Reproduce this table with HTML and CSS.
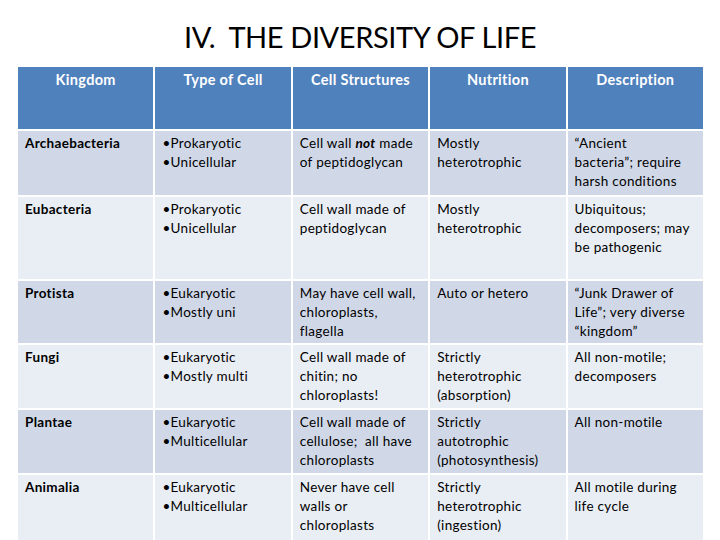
FILE: index.html
```html
<!DOCTYPE html>
<html>
<head>
<meta charset="utf-8">
<link rel="stylesheet" href="styles.css">
</head>
<body>
<h1 class="title">IV.&nbsp; THE DIVERSITY OF LIFE</h1>
<div class="table">
  <div class="cell head">Kingdom</div>
  <div class="cell head">Type of Cell</div>
  <div class="cell head">Cell Structures</div>
  <div class="cell head">Nutrition</div>
  <div class="cell head">Description</div>

  <div class="cell odd name">Archaebacteria</div>
  <div class="cell odd">•Prokaryotic<br>•Unicellular</div>
  <div class="cell odd">Cell wall <em class="strong">not</em> made<br>of peptidoglycan</div>
  <div class="cell odd">Mostly<br>heterotrophic</div>
  <div class="cell odd">“Ancient<br>bacteria”; require<br>harsh conditions</div>

  <div class="cell even name">Eubacteria</div>
  <div class="cell even">•Prokaryotic<br>•Unicellular</div>
  <div class="cell even">Cell wall made of<br>peptidoglycan</div>
  <div class="cell even">Mostly<br>heterotrophic</div>
  <div class="cell even">Ubiquitous;<br>decomposers; may<br>be pathogenic</div>

  <div class="cell odd name">Protista</div>
  <div class="cell odd">•Eukaryotic<br>•Mostly uni</div>
  <div class="cell odd">May have cell wall,<br>chloroplasts,<br>flagella</div>
  <div class="cell odd">Auto or hetero</div>
  <div class="cell odd">“Junk Drawer of<br>Life”; very diverse<br>“kingdom”</div>

  <div class="cell even name">Fungi</div>
  <div class="cell even">•Eukaryotic<br>•Mostly multi</div>
  <div class="cell even">Cell wall made of<br>chitin; no<br>chloroplasts!</div>
  <div class="cell even">Strictly<br>heterotrophic<br>(absorption)</div>
  <div class="cell even">All non-motile;<br>decomposers</div>

  <div class="cell odd name">Plantae</div>
  <div class="cell odd">•Eukaryotic<br>•Multicellular</div>
  <div class="cell odd">Cell wall made of<br>cellulose;&nbsp; all have<br>chloroplasts</div>
  <div class="cell odd">Strictly<br>autotrophic<br>(photosynthesis)</div>
  <div class="cell odd">All non-motile</div>

  <div class="cell even name">Animalia</div>
  <div class="cell even">•Eukaryotic<br>•Multicellular</div>
  <div class="cell even">Never have cell<br>walls or<br>chloroplasts</div>
  <div class="cell even">Strictly<br>heterotrophic<br>(ingestion)</div>
  <div class="cell even">All motile during<br>life cycle</div>
</div>
</body>
</html>
```
FILE: styles.css
```css
html, body {
  margin: 0;
  padding: 0;
  background: #ffffff;
  overflow: hidden;
}
body {
  width: 720px;
  height: 540px;
  font-family: Lato, "Open Sans", sans-serif;
  color: #000;
}
.title {
  margin: 0;
  height: 67px;
  display: flex;
  align-items: center;
  justify-content: center;
  padding-top: 6px;
  box-sizing: border-box;
  font-size: 29px;
  font-weight: normal;
  letter-spacing: -0.4px;
}
.table {
  margin-left: 18px;
  width: 685px;
  display: grid;
  grid-template-columns: repeat(5, 1fr);
  grid-template-rows: 62px 64px 82px 62px 63px 63px 66px;
  gap: 2px;
  background: #ffffff;
}
.cell {
  padding: 3px 0 0 7px;
  font-size: 13.5px;
  line-height: 19px;
  letter-spacing: 0.3px;
  white-space: nowrap;
}
.strong {
  font-weight: bold;
  font-style: italic;
}
.head {
  background: #4f81bd;
  color: #ffffff;
  text-align: center;
  font-weight: bold;
  font-size: 14.5px;
  padding: 3px 0 0 0;
  line-height: 20px;
}
.odd { background: #d0d8e8; }
.even { background: #e9edf4; }
.name { font-weight: bold; }
```
